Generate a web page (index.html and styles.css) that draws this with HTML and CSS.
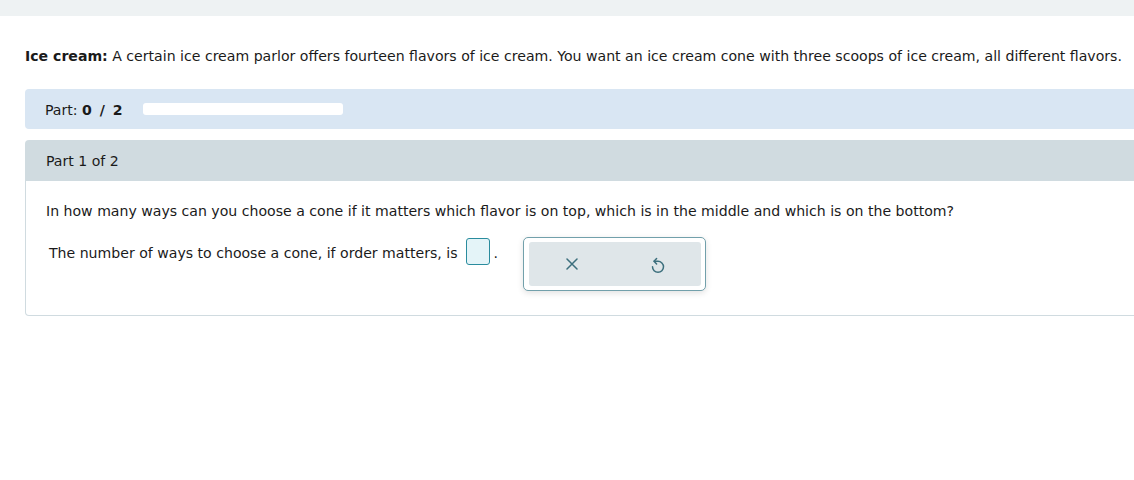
FILE: index.html
```html
<!DOCTYPE html>
<html>
<head>
<meta charset="utf-8">
<link rel="stylesheet" href="styles.css">
</head>
<body>
<div class="topbar"></div>
<div class="page">
  <p class="intro"><b>Ice cream:</b> A certain ice cream parlor offers fourteen flavors of ice cream. You want an ice cream cone with three scoops of ice cream, all different flavors.</p>
  <div class="progress">
    <span class="plabel">Part: <b>0 / 2</b></span>
    <span class="pbar"></span>
  </div>
  <div class="card">
    <div class="card-head">Part 1 of 2</div>
    <div class="card-body">
      <p class="question">In how many ways can you choose a cone if it matters which flavor is on top, which is in the middle and which is on the bottom?</p>
      <div class="answer-row">
        <span class="answer-text">The number of ways to choose a cone, if order matters, is</span>
        <span class="input"></span>
        <span class="dot">.</span>
        <div class="tools">
          <div class="tools-inner">
            <span class="tool">
              <svg width="12" height="12" viewBox="0 0 12 12"><path d="M1 1 L11 11 M11 1 L1 11" stroke="#3c6f7d" stroke-width="1.5" fill="none" stroke-linecap="round"/></svg>
            </span>
            <span class="tool">
              <svg class="undo" width="14" height="18" viewBox="0 0 14 18"><path d="M5.6 2.6 L3 5.3 L5.6 8" stroke="#3c6f7d" stroke-width="1.5" fill="none" stroke-linecap="round" stroke-linejoin="round"/><path d="M3.2 5.3 H7 A5.5 5.5 0 1 1 1.5 10.8" stroke="#3c6f7d" stroke-width="1.5" fill="none" stroke-linecap="round" stroke-linejoin="round"/></svg>
            </span>
          </div>
        </div>
      </div>
    </div>
  </div>
</div>
</body>
</html>
```
FILE: styles.css
```css
html, body {
  margin: 0;
  padding: 0;
  background: #ffffff;
  overflow: hidden;
}
body {
  font-family: "DejaVu Sans", Verdana, sans-serif;
  font-size: 14.1px;
  color: #1a1a1a;
}
.topbar {
  height: 16px;
  background: #eef2f3;
}
.page {
  margin-left: 25px;
  width: 1130px;
}
.intro {
  margin: 0;
  padding-top: 30px;
  line-height: 20px;
  white-space: nowrap;
}
.progress {
  margin-top: 23px;
  height: 40px;
  background: #d9e6f3;
  border-radius: 4px 0 0 4px;
  display: flex;
  align-items: center;
  padding-left: 20px;
}
.plabel {
  width: 98px;
  padding-top: 2px;
}
.plabel b {
  letter-spacing: 1.5px;
}
.pbar {
  width: 200px;
  height: 12px;
  background: #ffffff;
  border-radius: 3px;
}
.card {
  margin-top: 11px;
  border-radius: 4px 0 0 4px;
}
.card-head {
  height: 41px;
  background: #d0dbe0;
  border-radius: 4px 0 0 0;
  display: flex;
  align-items: center;
  padding-left: 21px;
  padding-top: 1px;
  box-sizing: border-box;
}
.card-body {
  border: 1px solid #d0dbe0;
  border-top: none;
  border-radius: 0 0 0 4px;
  height: 134px;
  padding-left: 20px;
}
.question {
  margin: 0;
  padding-top: 20px;
  line-height: 20px;
  white-space: nowrap;
}
.answer-row {
  display: flex;
  align-items: flex-start;
  margin-top: 16px;
  padding-left: 3px;
}
.answer-text {
  line-height: 20px;
  margin-top: 6px;
}
.input {
  width: 22px;
  height: 25px;
  margin-top: 1px;
  margin-left: 8px;
  border: 1px solid #2a8c9e;
  background: #e4f4f8;
  border-radius: 3px;
}
.dot {
  margin-left: 4px;
  line-height: 20px;
  margin-top: 6px;
}
.tools {
  margin-left: 25px;
  width: 172px;
  height: 44px;
  padding: 4px 4px 4px 5px;
  border: 1px solid #72a0ab;
  border-radius: 5px;
  background: #ffffff;
  box-shadow: 0 2px 6px rgba(0, 0, 0, 0.12);
}
.tools-inner {
  height: 44px;
  background: #dfe6e9;
  border-radius: 3px;
  display: flex;
}
.tool {
  flex: 1;
  display: flex;
  align-items: center;
  justify-content: center;
}
.undo {
  margin-top: 1px;
}
```
